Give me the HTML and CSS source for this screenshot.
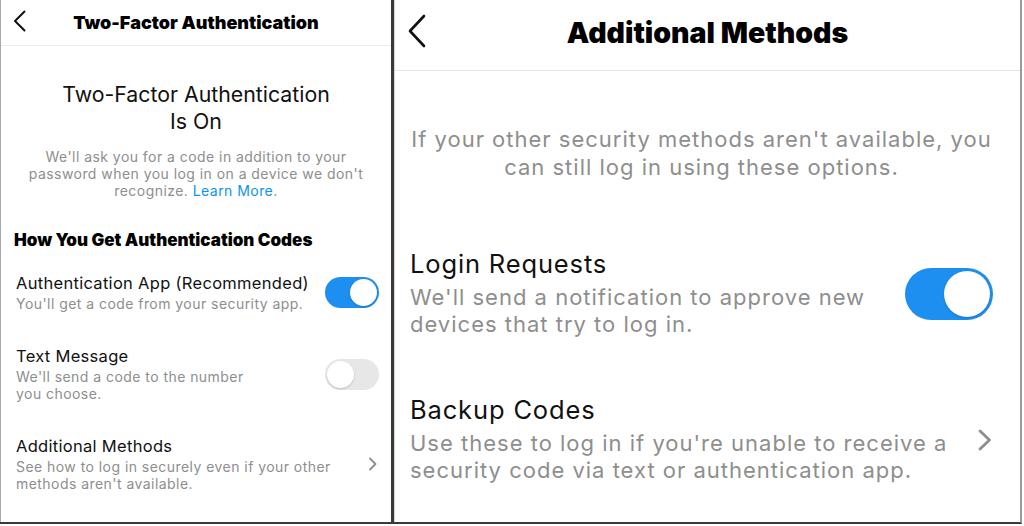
FILE: index.html
```html
<!DOCTYPE html>
<html>
<head>
<meta charset="utf-8">
<link rel="stylesheet" href="styles.css">
</head>
<body>
<div class="frame">
  <section class="panel left">
    <header class="bar bar-s">
      <svg class="back back-s" viewBox="0 0 14 22" width="14" height="22"><path d="M11.5 1.5 L2 11 L11.5 20.5" fill="none" stroke="#111" stroke-width="2" stroke-linecap="round" stroke-linejoin="round"/></svg>
      <h1 class="title title-s">Two-Factor Authentication</h1>
    </header>
    <div class="intro">
      <h2 class="big">Two-Factor Authentication<br>Is On</h2>
      <p class="lead">We'll ask you for a code in addition to your password when you log in on a device we don't recognize. <a class="link">Learn More</a>.</p>
    </div>
    <h3 class="section">How You Get Authentication Codes</h3>
    <div class="list list-s">
      <div class="row">
        <div class="txt">
          <div class="name name-s">Authentication App (Recommended)</div>
          <div class="desc desc-s">You'll get a code from your security app.</div>
        </div>
        <div class="toggle toggle-s on"><span class="knob"></span></div>
      </div>
      <div class="row">
        <div class="txt">
          <div class="name name-s">Text Message</div>
          <div class="desc desc-s narrow">We'll send a code to the number you choose.</div>
        </div>
        <div class="toggle toggle-s off"><span class="knob"></span></div>
      </div>
      <div class="row">
        <div class="txt">
          <div class="name name-s">Additional Methods</div>
          <div class="desc desc-s">See how to log in securely even if your other methods aren't available.</div>
        </div>
        <svg class="chev chev-s" viewBox="0 0 10 14" width="10" height="14"><path d="M2 1.5 L7.5 7 L2 12.5" fill="none" stroke="#8e8e8e" stroke-width="1.8" stroke-linecap="round" stroke-linejoin="round"/></svg>
      </div>
    </div>
  </section>
  <section class="panel right">
    <header class="bar bar-l">
      <svg class="back back-l" viewBox="0 0 20 34" width="20" height="34"><path d="M17 2 L3 17 L17 32" fill="none" stroke="#111" stroke-width="2.6" stroke-linecap="round" stroke-linejoin="round"/></svg>
      <h1 class="title title-l">Additional Methods</h1>
    </header>
    <p class="lead-l">If your other security methods aren't available, you can still log in using these options.</p>
    <div class="list list-l">
      <div class="row">
        <div class="txt">
          <div class="name name-l">Login Requests</div>
          <div class="desc desc-l">We'll send a notification to approve new devices that try to log in.</div>
        </div>
        <div class="toggle toggle-l on"><span class="knob"></span></div>
      </div>
      <div class="row">
        <div class="txt">
          <div class="name name-l">Backup Codes</div>
          <div class="desc desc-l">Use these to log in if you're unable to receive a security code via text or authentication app.</div>
        </div>
        <svg class="chev chev-l" viewBox="0 0 16 22" width="16" height="22"><path d="M3 2 L12.5 11 L3 20" fill="none" stroke="#8e8e8e" stroke-width="2.8" stroke-linecap="round" stroke-linejoin="round"/></svg>
      </div>
    </div>
  </section>
</div>
</body>
</html>
```

FILE: styles.css
```css
* { box-sizing: border-box; margin: 0; padding: 0; }
html, body { width: 1024px; height: 526px; background: #fff; overflow: hidden; }
body { font-family: Inter, "Noto Sans", "Liberation Sans", sans-serif; color: #111; }

.frame {
  display: flex;
  width: 1022px;
  height: 524px;
  border-bottom: 2px solid #3a3a3a;
  border-right: 2px solid #9a9a9a;
}

.panel { display: flex; flex-direction: column; height: 100%; }
.left { width: 394px; border-left: 1px solid #a8a8a8; border-right: 3px solid #3a3a3a; }
.right { flex: 1; border-left: 1px solid #d6d6d6; }

.bar { position: relative; display: flex; align-items: center; justify-content: center; border-bottom: 1px solid #ececec; }
.bar-s { height: 46px; }
.bar-l { height: 71px; padding-bottom: 4px; border-bottom-color: #e4e4e4; }
.back { position: absolute; }
.back-s { left: 12px; top: 10px; }
.back-l { left: 12px; top: 14px; }
.title { font-weight: 900; color: #000; }
.title-s { font-size: 18px; line-height: 22px; }
.title-l { font-size: 28.5px; line-height: 34px; }

.intro { text-align: center; margin-top: 35px; padding: 0 6px; }
.big { font-weight: 400; font-size: 21.3px; line-height: 27px; color: #111; }
.lead { margin-top: 13px; font-size: 14px; line-height: 17px; letter-spacing: 0.45px; color: #8e8e8e; padding: 0 12px; }
.link { color: #0a95f2; }

.section { margin-top: 31px; padding-left: 13px; font-size: 17px; line-height: 20px; font-weight: 900; color: #000; }

.list { display: flex; flex-direction: column; }
.list-s { margin-top: 23px; gap: 34px; padding: 0 12px 0 15px; }
.list-l { margin-top: 68px; gap: 57px; padding: 0 27px 0 15px; }

.row { display: flex; align-items: center; justify-content: space-between; gap: 12px; }
.txt { flex: 1; }
.name { color: #111; }
.name-s { font-size: 16.5px; line-height: 20px; letter-spacing: 0.3px; }
.name-l { font-size: 25.5px; line-height: 30px; letter-spacing: 0.85px; }
.desc { color: #8e8e8e; }
.desc-s { margin-top: 2px; font-size: 14px; line-height: 17px; letter-spacing: 0.45px; }
.desc-s.narrow { max-width: 235px; }
.desc-l { margin-top: 5px; font-size: 22px; line-height: 27px; letter-spacing: 1px; }

.lead-l { margin-top: 54px; padding: 0 22px 0 10px; text-align: center; font-size: 22px; line-height: 28px; letter-spacing: 1px; color: #8e8e8e; }

.toggle { position: relative; flex: none; border-radius: 999px; }
.toggle-s { width: 54px; height: 31px; }
.toggle-l { width: 88px; height: 52px; }
.toggle.on { background: #1d8ff1; }
.toggle.off { background: #e7e7e8; }
.knob { position: absolute; top: 2px; background: #fff; border-radius: 50%; box-shadow: 0 1px 2px rgba(0,0,0,0.18); }
.toggle-s .knob { width: 27px; height: 27px; }
.toggle-l .knob { width: 46px; height: 46px; top: 3px; }
.toggle-s.on .knob { right: 2px; }
.toggle-s.off .knob { left: 2px; }
.toggle-l.on .knob { right: 3px; }

.chev { flex: none; }
.chev-s { margin-right: 1px; }
.chev-l { margin-right: 0; }
```
